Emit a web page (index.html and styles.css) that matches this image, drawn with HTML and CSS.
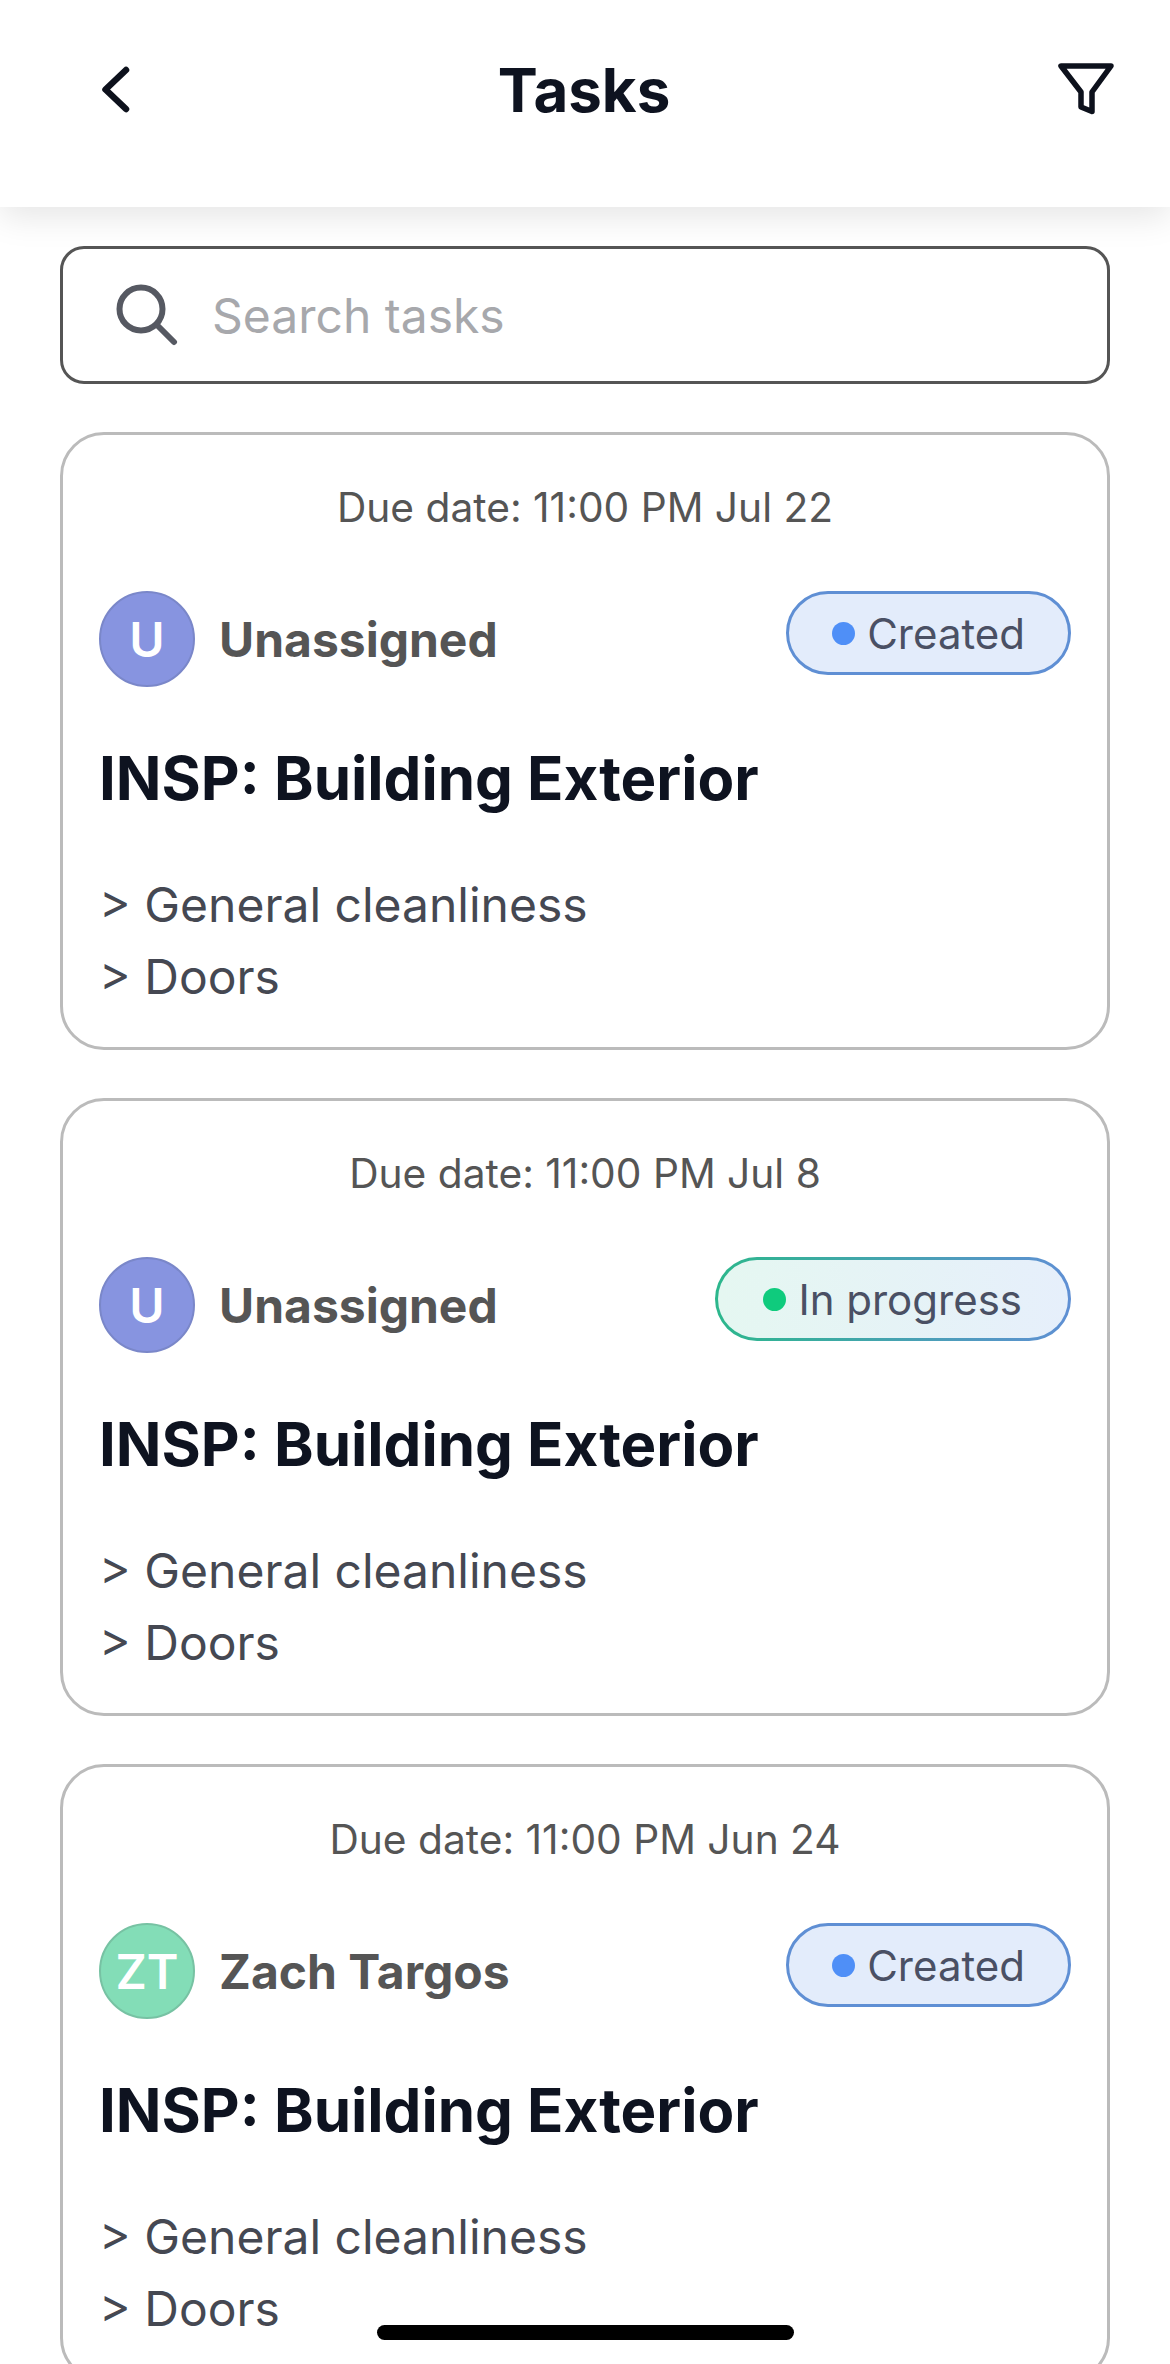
FILE: index.html
```html
<!DOCTYPE html>
<html lang="en">
<head>
<meta charset="utf-8">
<title>Tasks</title>
<link rel="stylesheet" href="styles.css">
</head>
<body>
<div class="screen">
  <header class="topbar">
    <svg class="icon-back" viewBox="0 0 30 54" aria-hidden="true"><path d="M26 10 5.5 29.5 26 49"/></svg>
    <h1 class="page-title">Tasks</h1>
    <svg class="icon-filter" viewBox="0 0 60 56" aria-hidden="true"><path d="M5 6h50L36 32v19.5L25 47V32z"/></svg>
  </header>
  <main class="content">
    <div class="search">
      <svg class="icon-search" viewBox="0 0 62 62" aria-hidden="true"><circle cx="25" cy="25" r="21.5"/><path d="m41 41 17 17"/></svg>
      <span class="search-placeholder">Search tasks</span>
    </div>

    <article class="card">
      <p class="due">Due date: 11:00 PM Jul 22</p>
      <div class="meta">
        <div class="assignee"><span class="avatar avatar-blue">U</span><span class="name">Unassigned</span></div>
        <span class="badge badge-created"><i class="dot dot-blue"></i>Created</span>
      </div>
      <h2 class="task-title">INSP: Building Exterior</h2>
      <ul class="items"><li>&gt; General cleanliness</li><li>&gt; Doors</li></ul>
    </article>

    <article class="card">
      <p class="due">Due date: 11:00 PM Jul 8</p>
      <div class="meta">
        <div class="assignee"><span class="avatar avatar-blue">U</span><span class="name">Unassigned</span></div>
        <span class="badge badge-progress"><i class="dot dot-green"></i>In progress</span>
      </div>
      <h2 class="task-title">INSP: Building Exterior</h2>
      <ul class="items"><li>&gt; General cleanliness</li><li>&gt; Doors</li></ul>
    </article>

    <article class="card">
      <p class="due">Due date: 11:00 PM Jun 24</p>
      <div class="meta">
        <div class="assignee"><span class="avatar avatar-green">ZT</span><span class="name">Zach Targos</span></div>
        <span class="badge badge-created"><i class="dot dot-blue"></i>Created</span>
      </div>
      <h2 class="task-title">INSP: Building Exterior</h2>
      <ul class="items"><li>&gt; General cleanliness</li><li>&gt; Doors</li></ul>
    </article>
  </main>
  <div class="home-bar"></div>
</div>
</body>
</html>
```
FILE: styles.css
```css
* { box-sizing: border-box; }
html, body { margin: 0; padding: 0; background: #fff; }
body { font-family: Inter, "Liberation Sans", sans-serif; }
.screen { position: relative; width: 1170px; height: 2364px; overflow: hidden; background: #fff; }

.topbar {
  position: relative;
  height: 207px;
  padding: 60px 54px 0;
  display: grid;
  grid-template-columns: 1fr auto 1fr;
  align-items: start;
  background: #fff;
  box-shadow: 0 10px 32px rgba(0, 0, 0, 0.1);
}
.icon-back { width: 30px; height: 54px; margin-left: 46px; fill: none; stroke: #0d111c; stroke-width: 6.5; stroke-linecap: round; stroke-linejoin: round; }
.icon-filter { width: 60px; height: 56px; justify-self: end; fill: none; stroke: #0d111c; stroke-width: 5.5; stroke-linejoin: round; }
.page-title { margin: 2px 2px 0 0; font-size: 60px; line-height: 56px; font-weight: 700; color: #0e1320; }

.content { padding: 39px 60px 0; display: flex; flex-direction: column; gap: 48px; }

.search {
  height: 138px;
  padding: 0 0 0 53px;
  display: flex;
  align-items: center;
  gap: 34px;
  border: 3px solid #555;
  border-radius: 24px;
  background: #fff;
}
.icon-search { width: 62px; height: 62px; fill: none; stroke: #565962; stroke-width: 6; stroke-linecap: round; flex: none; }
.search-placeholder { font-size: 48px; color: #a7a8ac; }

.card {
  height: 618px;
  flex: none;
  padding: 49px 36px 0;
  border: 3px solid #bbb;
  border-radius: 44px;
  background: #fff;
}
.due { margin: 0; text-align: center; font-size: 40.7px; line-height: 48px; color: #555; }
.meta { margin-top: 59px; display: flex; justify-content: space-between; align-items: flex-start; }
.assignee { display: flex; align-items: center; gap: 24px; }
.avatar {
  width: 96px; height: 96px;
  display: flex; align-items: center; justify-content: center;
  border-radius: 50%;
  font-size: 48px; font-weight: 600; color: #fff;
  flex: none;
}
.avatar-blue { background: #8794e0; border: 2px solid #7a87c9; }
.avatar-green { background: #83ddb7; border: 2px solid #77c2a3; }
.name { font-size: 48px; font-weight: 700; color: #555; }
.badge {
  height: 84px;
  padding: 0 43px 0 43px;
  display: inline-flex;
  align-items: center;
  gap: 12px;
  border-radius: 42px;
  font-size: 42px;
  color: #4a5064;
}
.badge-created { background: #e3ecfb; border: 3px solid #5f8fd4; }
.badge-progress {
  padding: 0 46px 0 45px;
  border: 3px solid transparent;
  background:
    linear-gradient(90deg, #e5f7f1, #e6effb) padding-box,
    linear-gradient(90deg, #2cb78c, #5f8fd4) border-box;
}
.dot { width: 23px; height: 23px; border-radius: 50%; flex: none; }
.dot-blue { background: #4f8ff7; }
.dot-green { background: #0fcb7d; }
.task-title { margin: 55px 0 0; font-size: 60px; line-height: 72px; font-weight: 700; color: #0e1320; }
.items { margin: 55px 0 0; padding: 0; list-style: none; font-size: 48px; line-height: 72px; color: #454852; }

.home-bar { position: absolute; left: 377px; top: 2325px; width: 417px; height: 15px; border-radius: 8px; background: #000; }
```
